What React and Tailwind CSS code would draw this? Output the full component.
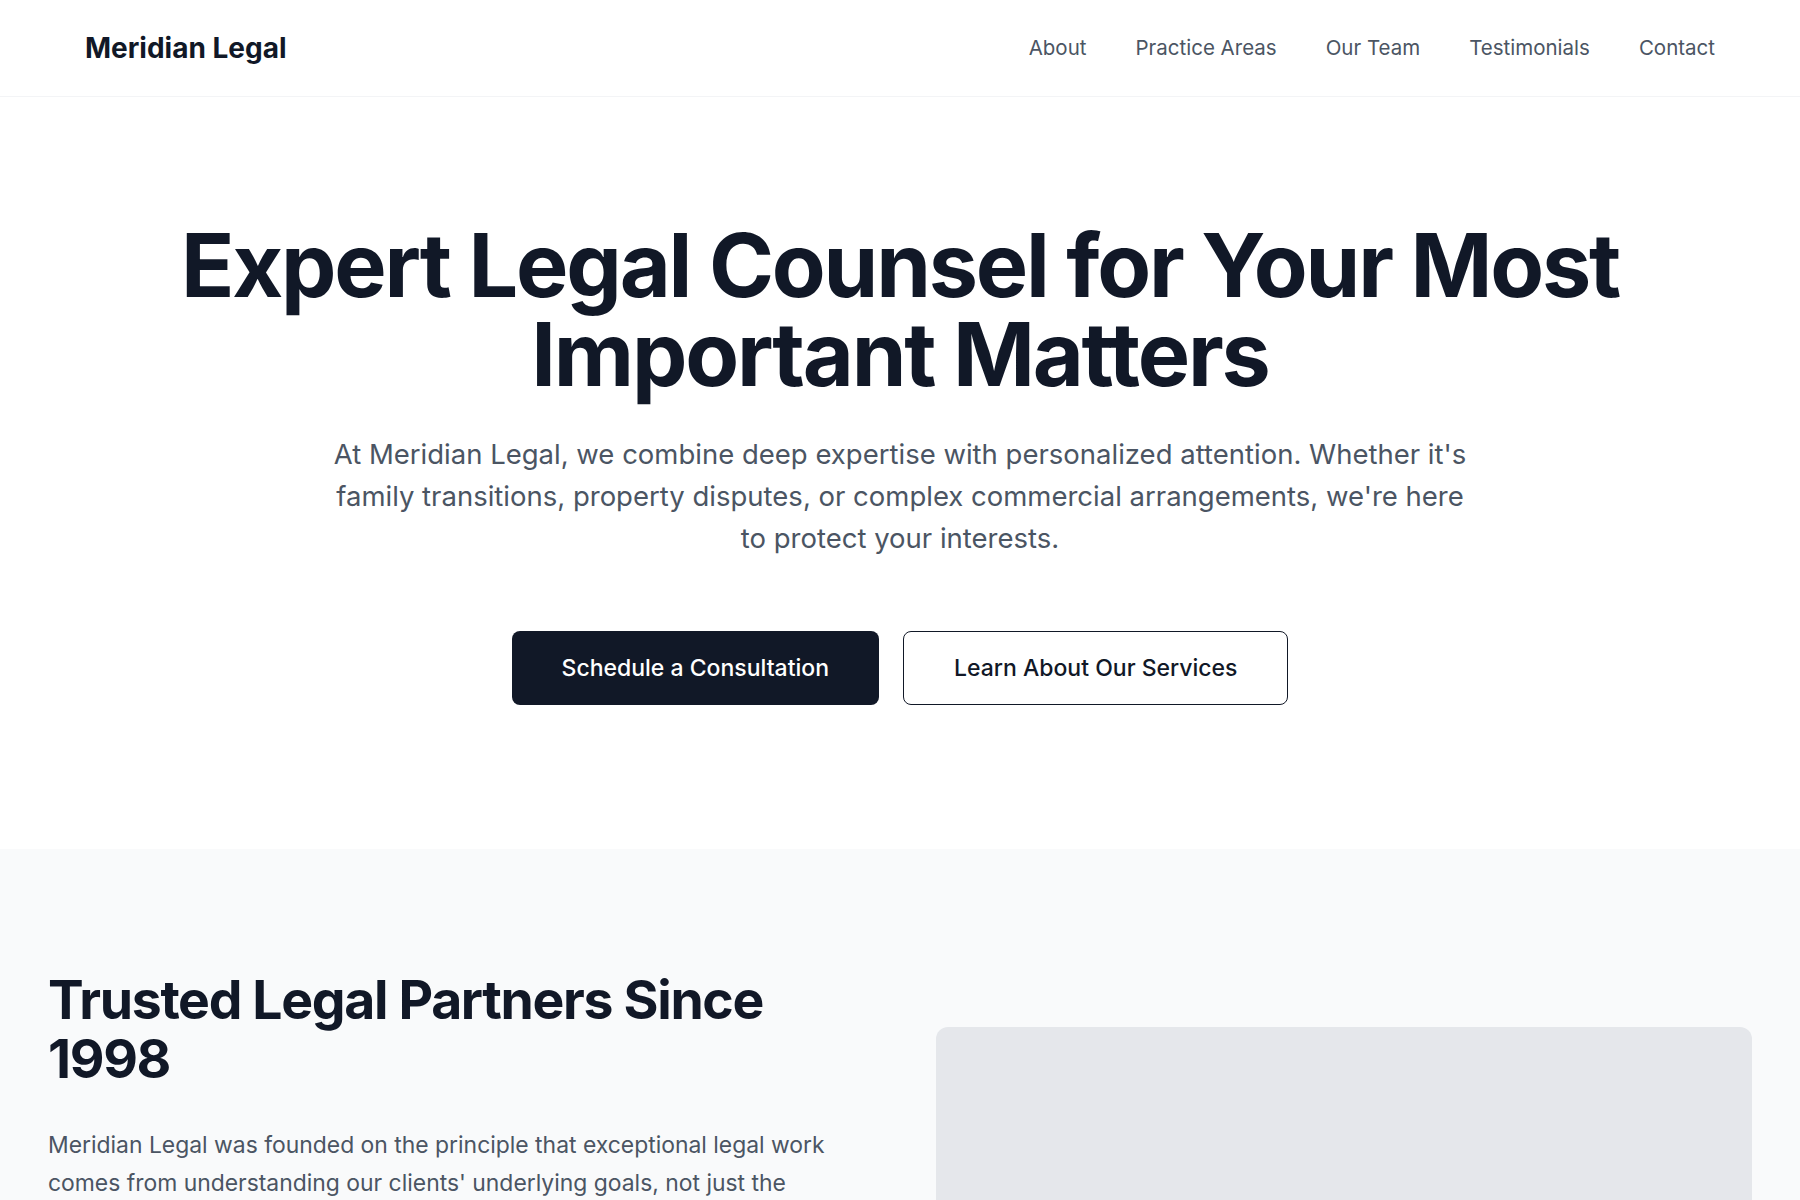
export default function App() {
  const nav = ["About", "Practice Areas", "Our Team", "Testimonials", "Contact"];
  return (
    <div className="min-h-screen bg-white font-['Inter',sans-serif] text-[#111827]">
      <header className="h-[97px] border-b border-[#f3f4f6] px-[85px] flex items-center justify-between">
        <div className="text-[28px] font-bold text-[#111827]">Meridian Legal</div>
        <nav className="flex items-center gap-[49px]">
          {nav.map((n) => (
            <a key={n} href="#" className="text-[20.5px] text-[#4b5563]">
              {n}
            </a>
          ))}
        </nav>
      </header>

      <section className="pt-[124px] pb-[144px] px-12 flex flex-col items-center text-center">
        <h1 className="max-w-[1470px] text-[88px] leading-[89px] font-bold tracking-tight text-[#111827]">
          Expert Legal Counsel for Your Most Important Matters
        </h1>
        <p className="mt-[34px] max-w-[1150px] text-[27.5px] leading-[42px] text-[#4b5563]">
          At Meridian Legal, we combine deep expertise with personalized attention. Whether it's family
          transitions, property disputes, or complex commercial arrangements, we're here to protect your
          interests.
        </p>
        <div className="mt-[72px] flex items-center gap-6">
          <button className="h-[74px] px-[50px] rounded-lg bg-[#111827] text-white text-[23px] font-medium">
            Schedule a Consultation
          </button>
          <button className="h-[74px] px-[50px] rounded-lg border-[1.5px] border-[#111827] bg-white text-[#111827] text-[23px] font-medium">
            Learn About Our Services
          </button>
        </div>
      </section>

      <section className="bg-[#f9fafb] px-12 pt-[121px] pb-[120px]">
        <div className="grid grid-cols-2 gap-[72px] items-start">
          <div>
            <h2 className="text-[53.5px] leading-[59px] font-bold tracking-tight text-[#111827]">
              Trusted Legal Partners Since 1998
            </h2>
            <p className="mt-[38px] text-[22.9px] leading-[38px] text-[#4b5563]">
              Meridian Legal was founded on the principle that exceptional legal work comes from understanding
              our clients' underlying goals, not just the immediate legal questions in front of them. For more
              than two decades, our attorneys have guided individuals, families and businesses through their
              most consequential decisions.
            </p>
          </div>
          <div className="mt-[57px] h-[480px] rounded-xl bg-[#e5e7eb]" />
        </div>
      </section>
    </div>
  );
}
